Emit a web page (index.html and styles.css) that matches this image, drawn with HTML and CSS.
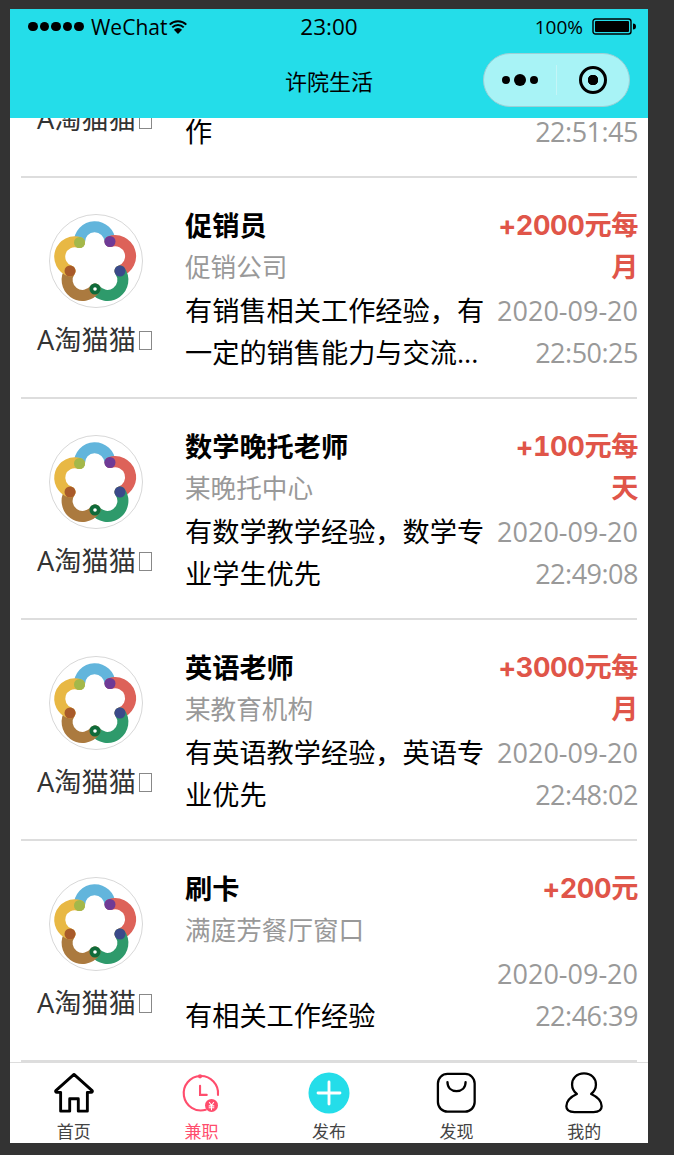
FILE: index.html
```html
<!DOCTYPE html>
<html lang="zh-CN">
  <head>
    <meta charset="UTF-8" />
    <meta name="viewport" content="width=device-width, initial-scale=1.0" />
    <title>许院生活</title>
    <link rel="stylesheet" href="styles.css">
  </head>
  <body>
    <svg class="defs" width="0" height="0">
      <symbol id="logo" viewBox="0 0 94 94">
        <circle cx="47" cy="47" r="46.5" fill="#fff" stroke="#d8d8d8" />
        <g fill="none" stroke-width="11" stroke-linecap="round">
          <path d="M30.5 28.5A15 15 0 0 1 61 27.5" stroke="#62b5dc" />
          <path d="M61 27.5A15 15 0 0 1 71 57" stroke="#dd6259" />
          <path d="M71 57A15 15 0 0 1 46 75" stroke="#2e9a6b" />
          <path d="M46 75A15 15 0 0 1 21 57" stroke="#ab7a3f" />
          <path d="M21 57A15 15 0 0 1 30.5 28.5" stroke="#e8b844" />
        </g>
        <circle cx="30.5" cy="28.5" r="5.5" fill="#a3b84a" />
        <circle cx="61" cy="27.5" r="5.5" fill="#6f3a96" />
        <circle cx="71" cy="57" r="5.5" fill="#3b4a8a" />
        <circle cx="21" cy="57" r="5.5" fill="#a85a2a" />
        <circle cx="46" cy="75" r="5.5" fill="#0f6b3a" />
        <circle cx="46" cy="75" r="1.8" fill="#fff" />
      </symbol>
    </svg>

    <div class="phone">
      <header class="topbar">
        <div class="status">
          <div class="status-left">
            <span class="signal"><i></i><i></i><i></i><i></i><i></i></span>
            <span class="carrier">WeChat</span>
            <svg class="wifi" width="18" height="14" viewBox="0 0 18 14">
              <path d="M.7 4.600a12 12 0 0 1 16.600 0M3.300 7.400a8.200 8.200 0 0 1 11.400 0" fill="none" stroke="#000" stroke-width="2" />
              <path d="M9 14L4.900 9.800a5.800 5.800 0 0 1 8.200 0z" />
            </svg>
          </div>
          <span class="clock">23:00</span>
          <div class="status-right">
            <span class="percent">100%</span>
            <svg width="45" height="17" viewBox="0 0 45 17">
              <rect x="1" y="1" width="38" height="15" rx="2.500" fill="none" stroke="#000" stroke-width="1.400" />
              <rect x="3" y="3" width="34" height="11" rx="1" />
              <path d="M41 5.500c2 0 3 1.200 3 3s-1 3-3 3z" />
            </svg>
          </div>
        </div>
        <div class="nav">
          <span class="nav-title">许院生活</span>
          <div class="capsule">
            <div class="capsule-dots"><i></i><i class="big"></i><i></i></div>
            <div class="capsule-target"><i></i></div>
          </div>
        </div>
      </header>

      <main class="list">
        <div class="list-inner">
          <div class="row">
            <div class="author">
              <svg class="avatar"><use href="#logo" /></svg>
              <div class="author-name">A淘猫猫<span class="tofu"></span></div>
            </div>
            <div class="job">
              <div class="job-title">服务员</div>
              <div class="job-company">某餐饮公司</div>
              <div class="job-desc">有相关销售经验，长期合作</div>
            </div>
            <div class="meta">
              <div class="price">+150元每天</div>
              <div class="date">2020-09-20</div>
              <div class="date time">22:51:45</div>
            </div>
          </div>

          <div class="row">
            <div class="author">
              <svg class="avatar"><use href="#logo" /></svg>
              <div class="author-name">A淘猫猫<span class="tofu"></span></div>
            </div>
            <div class="job">
              <div class="job-title">促销员</div>
              <div class="job-company">促销公司</div>
              <div class="job-desc">有销售相关工作经验，有一定的销售能力与交流...</div>
            </div>
            <div class="meta">
              <div class="price">+2000元每月</div>
              <div class="date">2020-09-20</div>
              <div class="date time">22:50:25</div>
            </div>
          </div>

          <div class="row">
            <div class="author">
              <svg class="avatar"><use href="#logo" /></svg>
              <div class="author-name">A淘猫猫<span class="tofu"></span></div>
            </div>
            <div class="job">
              <div class="job-title">数学晚托老师</div>
              <div class="job-company">某晚托中心</div>
              <div class="job-desc">有数学教学经验，数学专业学生优先</div>
            </div>
            <div class="meta">
              <div class="price">+100元每天</div>
              <div class="date">2020-09-20</div>
              <div class="date time">22:49:08</div>
            </div>
          </div>

          <div class="row">
            <div class="author">
              <svg class="avatar"><use href="#logo" /></svg>
              <div class="author-name">A淘猫猫<span class="tofu"></span></div>
            </div>
            <div class="job">
              <div class="job-title">英语老师</div>
              <div class="job-company">某教育机构</div>
              <div class="job-desc">有英语教学经验，英语专业优先</div>
            </div>
            <div class="meta">
              <div class="price">+3000元每月</div>
              <div class="date">2020-09-20</div>
              <div class="date time">22:48:02</div>
            </div>
          </div>

          <div class="row">
            <div class="author">
              <svg class="avatar"><use href="#logo" /></svg>
              <div class="author-name">A淘猫猫<span class="tofu"></span></div>
            </div>
            <div class="job">
              <div class="job-title">刷卡</div>
              <div class="job-company">满庭芳餐厅窗口</div>
              <div class="job-desc">有相关工作经验</div>
            </div>
            <div class="meta">
              <div class="price">+200元</div>
              <div class="date">2020-09-20</div>
              <div class="date time">22:46:39</div>
            </div>
          </div>
        </div>
      </main>

      <nav class="tabbar">
        <div class="tab">
          <svg width="44" height="44" viewBox="0 0 44 44" fill="none" stroke="#000" stroke-width="3" stroke-linejoin="round">
            <path d="M22 2.500L3 19.500c-.8.800 0 1.800 1 1.800h4V41h9.500V28h9V41H36V21.300h4c1 0 1.800-1 1-1.800z" />
          </svg>
          <span>首页</span>
        </div>
        <div class="tab active">
          <svg width="44" height="44" viewBox="0 0 44 44" fill="none" stroke="#ff4d6d" stroke-width="2.200" stroke-linecap="round">
            <path d="M27 39.500A18 18 0 1 1 39.800 24" />
            <circle cx="21" cy="4.500" r="2.200" fill="#ff4d6d" stroke="none" />
            <path d="M21 14.500V24H28" />
            <circle cx="33" cy="35" r="6.800" fill="#ff4d6d" stroke="none" />
            <path d="M30.800 32L33 35L35.200 32M30.500 35.500H35.500M30.500 37.500H35.500M33 35V39.500" stroke="#fff" stroke-width="1.100" />
          </svg>
          <span>兼职</span>
        </div>
        <div class="tab">
          <svg width="44" height="44" viewBox="0 0 44 44">
            <circle cx="22" cy="22" r="21.500" fill="#24dde9" />
            <path d="M22 10.500V33.500M10.500 22H33.500" stroke="#fff" stroke-width="3" stroke-linecap="round" />
          </svg>
          <span>发布</span>
        </div>
        <div class="tab">
          <svg width="44" height="44" viewBox="0 0 44 44" fill="none" stroke="#000" stroke-width="2.400" stroke-linecap="round">
            <rect x="2" y="2" width="38.500" height="39.500" rx="10" />
            <path d="M12 10.500c0 6 4 9.500 9.500 9.500s9.500-3.500 9.500-9.500" />
          </svg>
          <span>发现</span>
        </div>
        <div class="tab">
          <svg width="44" height="44" viewBox="0 0 44 44" fill="none" stroke="#000" stroke-width="2.400" stroke-linejoin="round">
            <path d="M22 1.500C14 1.500 9.500 7 9.500 13C9.500 18 12 21 14.500 23C9 25.500 3.500 30 3.500 36C3.500 41 7 42 12 42H32C37 42 40.500 41 40.500 36C40.500 30 35 25.500 29.500 23C32 21 34.500 18 34.500 13C34.500 7 30 1.500 22 1.500Z" />
          </svg>
          <span>我的</span>
        </div>
      </nav>
    </div>
  </body>
</html>
```

FILE: styles.css
```css
* {
  box-sizing: border-box;
}
body {
  margin: 0;
  background: #333;
  font-family: "Open Sans", "Noto Sans CJK SC", sans-serif;
  color: #000;
}
.defs {
  position: absolute;
}
.phone {
  width: 638px;
  height: 1134px;
  margin: 9px 0 12px 10px;
  background: #fff;
  display: flex;
  flex-direction: column;
  overflow: hidden;
}

/* top bar */
.topbar {
  height: 109px;
  flex: none;
  background: #24dde9;
}
.status {
  height: 35px;
  padding: 0 18px;
  display: grid;
  grid-template-columns: 1fr auto 1fr;
  align-items: center;
}
.status-left {
  display: flex;
  align-items: center;
}
.signal {
  display: flex;
  gap: 2px;
  margin-right: 7px;
}
.signal i {
  width: 9.600px;
  height: 9.600px;
  border-radius: 50%;
  background: #000;
}
.carrier {
  font-size: 21px;
  line-height: 28px;
}
.wifi {
  margin-left: 2px;
}
.clock {
  font-size: 22.500px;
  line-height: 28px;
}
.status-right {
  display: flex;
  align-items: center;
  justify-content: flex-end;
  gap: 9px;
  margin-right: -7px;
}
.percent {
  font-size: 19px;
}
.nav {
  height: 74px;
  display: grid;
  grid-template-columns: 1fr auto 1fr;
  align-items: center;
}
.nav-title {
  grid-column: 2;
  font-size: 22px;
  line-height: 30px;
}
.capsule {
  grid-column: 3;
  justify-self: end;
  width: 147px;
  height: 54px;
  margin: -2px 18px 0 0;
  border: 1.500px solid #9cd0d6;
  border-radius: 27px;
  background: #a8f3f6;
  display: flex;
  align-items: center;
}
.capsule-dots {
  width: 73px;
  height: 30px;
  border-right: 1px solid #c4f5f7;
  display: flex;
  align-items: center;
  justify-content: center;
  gap: 4px;
}
.capsule-dots i {
  width: 8px;
  height: 8px;
  border-radius: 50%;
  background: #000;
}
.capsule-dots i.big {
  width: 12px;
  height: 12px;
}
.capsule-target {
  flex: 1;
  display: flex;
  justify-content: center;
}
.capsule-target i {
  width: 28px;
  height: 28px;
  border: 3px solid #000;
  border-radius: 50%;
  background: radial-gradient(circle, #000 5px, transparent 5.500px);
}

/* list */
.list {
  flex: 1;
  overflow: hidden;
}
.list-inner {
  margin-top: -161px;
}
.row {
  margin: 0 11px;
  height: 221px;
  padding-top: 27px;
  border-bottom: 2px solid #ddd;
  display: flex;
  font-size: 27.200px;
  line-height: 42.350px;
}
.author {
  width: 150px;
  flex: none;
  display: flex;
  flex-direction: column;
  align-items: center;
  padding-top: 9px;
}
.avatar {
  width: 94px;
  height: 94px;
}
.author-name {
  margin-top: 11px;
  margin-left: -3px;
  color: #333;
  white-space: nowrap;
  display: flex;
  align-items: center;
}
.tofu {
  width: 13px;
  height: 19px;
  margin-left: 3px;
  border: 1px solid #888;
}
.job {
  flex: 1;
  margin-left: 14px;
  min-width: 0;
}
.job-title {
  font-weight: 700;
}
.job-company {
  font-size: 25.600px;
  color: #999;
}
.job-desc {
  height: 84.700px;
  display: flex;
  align-items: flex-end;
}
.meta {
  width: 146px;
  flex: none;
  margin-right: -1px;
  text-align: right;
}
.price {
  height: 84.700px;
  font-family: Inter, "Noto Sans CJK SC", sans-serif;
  font-variant-numeric: tabular-nums;
  letter-spacing: -0.400px;
  font-weight: 700;
  color: #e05549;
}
.date {
  font-size: 27px;
  color: #999;
}
.time {
  letter-spacing: -0.500px;
}

/* tabs */
.tabbar {
  height: 81px;
  flex: none;
  border-top: 1px solid #ddd;
  display: flex;
}
.tab {
  flex: 1;
  padding-top: 9px;
  display: flex;
  flex-direction: column;
  align-items: center;
  font-size: 17px;
  line-height: 22px;
  color: #444;
}
.tab svg {
  display: block;
}
.tab span {
  margin-top: 7px;
}
.tab.active {
  color: #ff4d6d;
}
```
